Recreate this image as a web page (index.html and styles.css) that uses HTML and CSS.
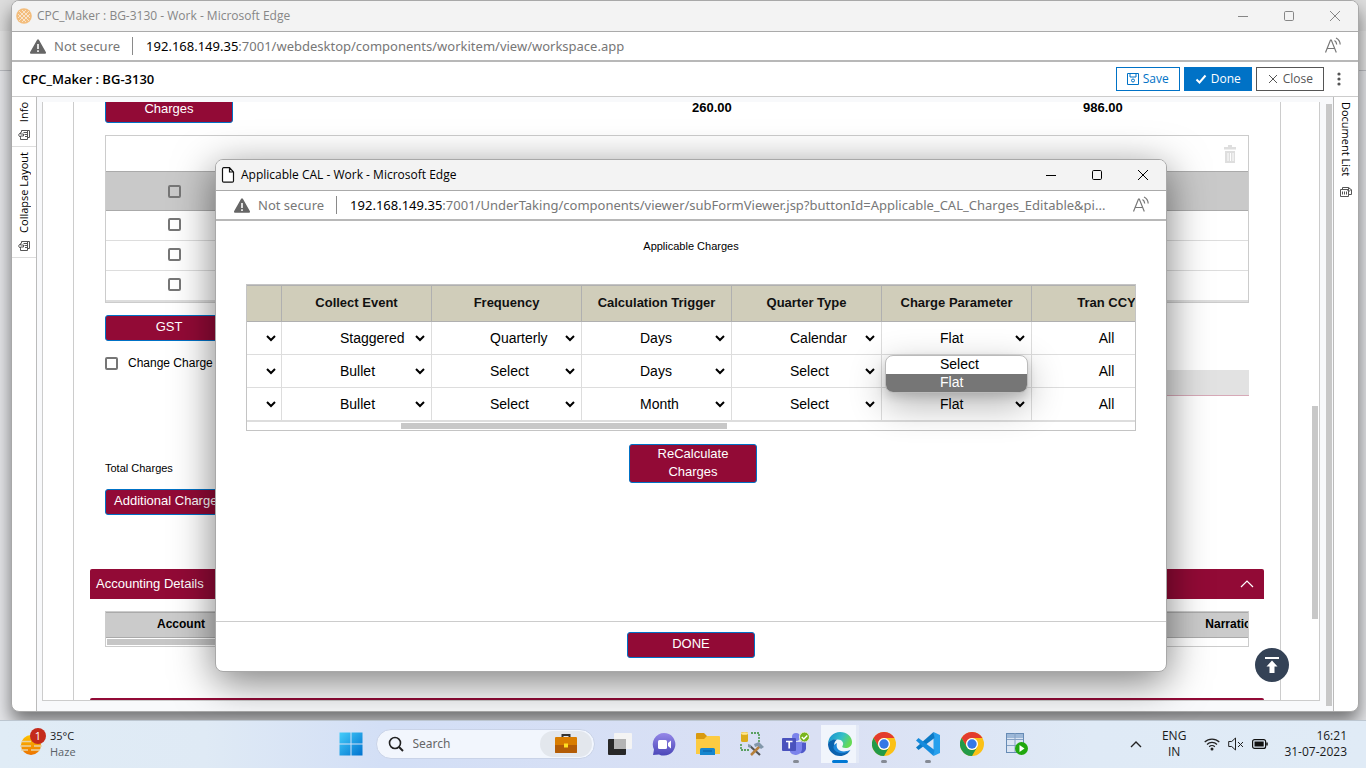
FILE: index.html
```html
<!DOCTYPE html>
<html lang="en">
<head>
<meta charset="utf-8">
<title>CPC_Maker : BG-3130 - Work</title>
<link rel="stylesheet" href="styles.css">
</head>
<body>
<svg class="defs" aria-hidden="true">
  <symbol id="i-warn" viewBox="0 0 16 15"><path d="M7 .9a1.2 1.2 0 0 1 2 0l6.8 12.2a1.1 1.1 0 0 1-1 1.7H1.200a1.100 1.100 0 0 1-1-1.700z" fill="#666"/><path d="M8 5v5M8 11.300v1.600" stroke="#fff" stroke-width="1.600"/></symbol>
  <symbol id="i-aloud" viewBox="0 0 18 18"><path d="M1.500 15.500 6.500 3h.8l5 12.500M3.300 11.500h7.400M10.500 3.500q2 1.200 2.200 4M12 1q4 2 4.200 6.500" fill="none" stroke="#777" stroke-width="1.200"/></symbol>
  <symbol id="i-min" viewBox="0 0 12 12"><path d="M1 6.500h10" stroke="currentColor"/></symbol>
  <symbol id="i-max" viewBox="0 0 12 12"><rect x="1.500" y="1.500" width="9" height="9" rx="1.200" fill="none" stroke="currentColor"/></symbol>
  <symbol id="i-x" viewBox="0 0 12 12"><path d="M1 1l10 10M11 1 1 11" stroke="currentColor" fill="none"/></symbol>
  <symbol id="i-restore" viewBox="0 0 12 12"><path d="M3.500 3.500v-2h8v7H9.500M5.500 3.500h4M6.500 5.500h3M7 7.500h2.500M2.500 3.500.5 6l2 2.500V7h3V5h-3zM2.500 8.500v2h7V2" fill="none" stroke="#555"/></symbol>
  <symbol id="i-list" viewBox="0 0 12 12"><path d="M.5 3.500h8v7h-8zM2.500 3V1.500h6M8.500 8.500h3v-5M2.500 5.500v3M4.500 5.500v3M6.500 5.500v3M7 4.500l2.500-2M8.500 1.500 11 3.500 8.500 6z" fill="none" stroke="#555"/></symbol>
  <symbol id="i-chrome" viewBox="0 0 24 24"><circle cx="12" cy="12" r="12" fill="#fbc116"/><path d="M1.600 6A12 12 0 0 1 22.400 6H12a6 6 0 0 0-5.200 9z" fill="#e33b2e"/><path d="M1.600 6A12 12 0 0 0 12 24l5.200-9a6 6 0 0 1-10.400 0z" fill="#229a48"/><circle cx="12" cy="12" r="6" fill="#fff"/><circle cx="12" cy="12" r="4.700" fill="#3478e6"/></symbol>
</svg>

<main class="desktop">
  <section class="window main-window" aria-label="Work item window">
    <div class="titlebar">
      <svg class="app-icon" viewBox="0 0 16 16"><circle cx="8" cy="8" r="7.800" fill="#f3bd7c"/><path d="M3 3l10 10M13 3 3 13M6 2l8 8M2 6l8 8M10 2 2 10M14 6l-8 8" stroke="#fae3c8"/></svg>
      <span class="window-title">CPC_Maker : BG-3130 - Work - Microsoft Edge</span>
      <span class="window-buttons">
        <button aria-label="Minimize"><svg><use href="#i-min"/></svg></button>
        <button aria-label="Maximize"><svg><use href="#i-max"/></svg></button>
        <button aria-label="Close window"><svg><use href="#i-x"/></svg></button>
      </span>
    </div>
    <div class="addressbar">
      <svg class="warn"><use href="#i-warn"/></svg>
      <span class="not-secure">Not secure</span>
      <span class="url"><b>192.168.149.35</b>:7001/webdesktop/components/workitem/view/workspace.app</span>
      <button class="aloud" aria-label="Read aloud"><svg><use href="#i-aloud"/></svg></button>
    </div>
    <header class="work-header">
      <h1>CPC_Maker : BG-3130</h1>
      <div class="work-actions">
        <button class="act save"><svg viewBox="0 0 12 12"><path d="M.5.5h11v11H.500zM3 .5v3.500h6V.500" fill="none" stroke="currentColor"/><circle cx="6" cy="7.500" r="1.500" fill="none" stroke="currentColor"/></svg>Save</button>
        <button class="act done"><svg viewBox="0 0 12 12"><path d="M1.500 6.500 4.500 9.500 10.500 2.500" fill="none" stroke="currentColor" stroke-width="2"/></svg>Done</button>
        <button class="act close"><svg viewBox="0 0 12 12"><path d="M2 2l8 8M10 2l-8 8" fill="none" stroke="currentColor"/></svg>Close</button>
        <button class="more" aria-label="More"><svg viewBox="0 0 4 14"><circle cx="2" cy="2" r="1.600"/><circle cx="2" cy="7" r="1.600"/><circle cx="2" cy="12" r="1.600"/></svg></button>
      </div>
    </header>
    <div class="work-body">
      <nav class="rail rail-left">
        <button class="rail-tab"><span>Info</span><svg><use href="#i-restore"/></svg></button>
        <button class="rail-tab"><span>Collapse Layout</span><svg><use href="#i-restore"/></svg></button>
      </nav>
      <div class="work-area">
        <div class="frame">
          <div class="form">
            <div class="inset">
              <div class="amounts"><button class="btn">Charges</button><b>260.00</b><b>986.00</b></div>
              <div class="grid-box">
                <div class="grid-tools"><button aria-label="Delete"><svg viewBox="0 0 12 18"><path d="M0 2h4V0h4v2h4v2.500H0zM1 6h10v12H1z" fill="#dedede"/><path d="M4 8v8M6.500 8v8M9 8v8" stroke="#fff"/></svg></button></div>
                <table class="charge-table">
                  <thead><tr><th><input type="checkbox" aria-label="Select all"></th><th></th></tr></thead>
                  <tbody>
                    <tr><td><input type="checkbox" aria-label="Select row 1"></td><td></td></tr>
                    <tr><td><input type="checkbox" aria-label="Select row 2"></td><td></td></tr>
                    <tr><td><input type="checkbox" aria-label="Select row 3"></td><td></td></tr>
                  </tbody>
                </table>
              </div>
              <button class="btn gst">GST</button>
              <div class="change-row">
                <label><input type="checkbox">Change Charge</label>
                <input class="readonly" type="text" disabled aria-label="Amount">
              </div>
              <p class="total">Total Charges</p>
              <button class="btn">Additional Charges</button>
            </div>
            <button class="section-head accounting">Accounting Details<svg viewBox="0 0 14 8"><path d="M1 7l6-6 6 6" fill="none" stroke="currentColor" stroke-width="1.200"/></svg></button>
            <div class="inset">
              <div class="account-box">
                <table class="account-table"><thead><tr><th>Account</th><th></th><th>Narration</th></tr></thead></table>
                <div class="account-scroll"></div>
              </div>
            </div>
            <div class="section-head next-section"></div>
          </div>
          <div class="frame-scroll"></div>
        </div>
        <div class="area-scroll"></div>
      </div>
      <nav class="rail rail-right">
        <button class="rail-tab"><span>Document List</span><svg><use href="#i-list"/></svg></button>
      </nav>
      <button class="to-top" aria-label="Back to top"><svg viewBox="0 0 14 16"><path d="M0 0h14v2H0zM7 3.500l5.500 6H9.500V16h-5V9.500h-3z" fill="#fff"/></svg></button>
    </div>
  </section>

  <section class="window popup" aria-label="Applicable CAL window">
    <div class="titlebar">
      <svg class="app-icon page-icon" viewBox="0 0 14 16"><path d="M1.500 2A1.200 1.200 0 0 1 2.700.7H8.500L12.500 5v9a1.200 1.200 0 0 1-1.200 1.200H2.700A1.200 1.200 0 0 1 1.500 14zM8.500.7V5h4" fill="#fff" stroke="#111" stroke-width="1.200"/></svg>
      <span class="window-title">Applicable CAL - Work - Microsoft Edge</span>
      <span class="window-buttons">
        <button aria-label="Minimize"><svg><use href="#i-min"/></svg></button>
        <button aria-label="Maximize"><svg><use href="#i-max"/></svg></button>
        <button aria-label="Close window"><svg><use href="#i-x"/></svg></button>
      </span>
    </div>
    <div class="addressbar">
      <svg class="warn"><use href="#i-warn"/></svg>
      <span class="not-secure">Not secure</span>
      <span class="url"><b>192.168.149.35</b>:7001/UnderTaking/components/viewer/subFormViewer.jsp?buttonId=Applicable_CAL_Charges_Editable&amp;pi...</span>
      <button class="aloud" aria-label="Read aloud"><svg><use href="#i-aloud"/></svg></button>
    </div>
    <div class="popup-body">
      <h2>Applicable Charges</h2>
      <div class="cal-wrap">
        <div class="cal-box">
          <table class="cal-table">
            <thead><tr><th class="first"></th><th>Collect Event</th><th>Frequency</th><th>Calculation Trigger</th><th>Quarter Type</th><th>Charge Parameter</th><th>Tran CCY</th></tr></thead>
            <tbody>
              <tr>
                <td><select class="narrow" aria-label="Charge type"><option></option></select></td>
                <td><select aria-label="Collect Event"><option>Staggered</option></select></td>
                <td><select aria-label="Frequency"><option>Quarterly</option></select></td>
                <td><select aria-label="Calculation Trigger"><option>Days</option></select></td>
                <td><select aria-label="Quarter Type"><option>Calendar</option></select></td>
                <td><select aria-label="Charge Parameter"><option>Flat</option></select></td>
                <td>All</td>
              </tr>
              <tr>
                <td><select class="narrow" aria-label="Charge type"><option></option></select></td>
                <td><select aria-label="Collect Event"><option>Bullet</option></select></td>
                <td><select aria-label="Frequency"><option>Select</option></select></td>
                <td><select aria-label="Calculation Trigger"><option>Days</option></select></td>
                <td><select aria-label="Quarter Type"><option>Select</option></select></td>
                <td><select aria-label="Charge Parameter"><option></option></select></td>
                <td>All</td>
              </tr>
              <tr>
                <td><select class="narrow" aria-label="Charge type"><option></option></select></td>
                <td><select aria-label="Collect Event"><option>Bullet</option></select></td>
                <td><select aria-label="Frequency"><option>Select</option></select></td>
                <td><select aria-label="Calculation Trigger"><option>Month</option></select></td>
                <td><select aria-label="Quarter Type"><option>Select</option></select></td>
                <td><select aria-label="Charge Parameter"><option>Flat</option></select></td>
                <td>All</td>
              </tr>
            </tbody>
          </table>
          <div class="cal-scroll"><span></span></div>
        </div>
        <ul class="menu" role="listbox" aria-label="Charge Parameter options">
          <li role="option">Select</li>
          <li role="option" aria-selected="true">Flat</li>
        </ul>
      </div>
      <button class="btn recalc">ReCalculate Charges</button>
    </div>
    <footer class="popup-foot"><button class="btn">DONE</button></footer>
  </section>
</main>

<footer class="taskbar">
  <div class="weather">
    <svg viewBox="0 0 28 28"><defs><linearGradient id="sun" x2="0" y2="1"><stop offset="0" stop-color="#ffc400"/><stop offset="1" stop-color="#ec7200"/></linearGradient></defs><circle cx="12" cy="17" r="10" fill="url(#sun)"/><path d="M3 13.500h9M15 13.500h8M1 18h11M15 18h8M2 22h7M12 22h9" stroke="#e9d2a4" stroke-width="1.500"/><circle cx="19" cy="8" r="8" fill="#c42b1c"/><text x="19" y="12" text-anchor="middle" class="badge-text">1</text></svg>
    <div><span class="temp">35°C</span><span class="cond">Haze</span></div>
  </div>
  <div class="apps">
    <button class="app" aria-label="Start"><svg viewBox="0 0 24 24"><defs><linearGradient id="win" x2="1" y2="1"><stop offset="0" stop-color="#45cdfa"/><stop offset="1" stop-color="#0072cf"/></linearGradient></defs><path d="M.5.5h11v11H.500zM12.500.5h11v11h-11zM.5 12.500h11v11H.500zM12.500 12.500h11v11h-11z" fill="url(#win)"/></svg></button>
    <div class="search">
      <svg viewBox="0 0 16 16"><circle cx="7" cy="7" r="5.500" fill="none" stroke="#222" stroke-width="1.600"/><path d="M11 11l4 4" stroke="#222" stroke-width="2"/></svg>
      <input type="text" placeholder="Search" aria-label="Search">
      <span class="search-pic"><svg viewBox="0 0 22 19"><path d="M7.500 4V1h7v3" fill="none" stroke="#333" stroke-width="2"/><rect y="3" width="22" height="16" rx="1" fill="#d97d00"/><path d="M0 11h22v7a1 1 0 0 1-1 1H1a1 1 0 0 1-1-1z" fill="#b35c06"/><rect x="9" y="9.500" width="4" height="4" fill="#ffdf20"/></svg></span>
    </div>
    <button class="app" aria-label="Task view"><svg viewBox="0 0 24 24"><rect x="0" y="7" width="18" height="16" rx="1" fill="#282828"/><rect x="6" y="1" width="18" height="16" rx="1" fill="#f4f4f4"/><path d="M6 7h12v10H6z" fill="#b4b4b4"/></svg></button>
    <button class="app" aria-label="Chat"><svg viewBox="0 0 24 24"><defs><linearGradient id="chat" x2="0" y2="1"><stop offset="0" stop-color="#9588e8"/><stop offset="1" stop-color="#4a46b8"/></linearGradient></defs><path d="M12 1a11.300 11.300 0 1 1-5 21.400L1 23l1-5.500A11.300 11.300 0 0 1 12 1z" fill="url(#chat)"/><rect x="6" y="8" width="9" height="9" rx="1.500" fill="#fff"/><path d="M16 11l3-2.500v8L16 14z" fill="#fff"/></svg></button>
    <button class="app" aria-label="File Explorer"><svg viewBox="0 0 24 24"><path d="M0 2a1 1 0 0 1 1-1h7l3 3h12v8H0z" fill="#d99a10"/><path d="M0 7h8l3-3h12a1 1 0 0 1 1 1v17H0z" fill="#fccb42"/><path d="M4 23v-5.500A1.500 1.500 0 0 1 5.500 16h12a1.500 1.500 0 0 1 1.500 1.500V23z" fill="#1686ce"/><path d="M7 19h9" stroke="#0a5ca0"/></svg></button>
    <button class="app" aria-label="Database tools"><svg viewBox="0 0 24 24"><path d="M11 1h8v9M1 12v6h9" fill="none" stroke="#308a30" stroke-width="1.300" stroke-dasharray="2 1"/><rect x="1" y="0" width="7" height="10" rx="1.500" fill="#dcac1c"/><ellipse cx="4.500" cy="1.500" rx="3.500" ry="1.300" fill="#ffe78d"/><path d="M10 14 20 23" stroke="#555" stroke-width="2.200"/><path d="M20 14 11 23" stroke="#b7813c" stroke-width="2.500"/><path d="M14 12l5-2 5 5-3 2-3-3-3 1zM8 12l3 1v3l-3-1z" fill="#8297aa"/></svg></button>
    <button class="app running" aria-label="Teams"><svg class="teams" viewBox="0 0 28 24"><circle cx="14" cy="5" r="4" fill="#7b83eb"/><circle cx="22" cy="8" r="3" fill="#5059c9"/><path d="M18 11h6v6a5 5 0 0 1-6 4z" fill="#5059c9"/><path d="M8 10h12v7a6.500 6.500 0 0 1-12 3z" fill="#7b83eb"/><rect x="0" y="6" width="14" height="13" rx="1" fill="#4a52bd"/><path d="M4 9.500h6.500M7.200 9.500v7" stroke="#fff" stroke-width="1.700"/><circle cx="22.500" cy="5" r="5" fill="#79b51c" stroke="#eef3e0"/><path d="M19.800 5l2 2 3.500-3.500" fill="none" stroke="#fff" stroke-width="1.400"/></svg></button>
    <button class="app active" aria-label="Edge"><svg viewBox="0 0 24 24"><defs><linearGradient id="e1" x2="1" y2=".4"><stop offset="0" stop-color="#168ad1"/><stop offset=".6" stop-color="#35bfc8"/><stop offset="1" stop-color="#65da55"/></linearGradient></defs><path d="M0 12A12 12 0 0 1 12 0c7 0 12 4.600 12 10 0 4-3 6-6.500 6-2.500 0-4-.8-3-2 2-3-.5-6.500-4.500-6.500C5 7.500 1 9 0 12z" fill="url(#e1)"/><path d="M0 12C1 8.500 5 7 9 7.500c-4 3-3.500 8 0 11 3.500 2.800 9 2.500 13.500-.8C20.500 21.500 16.500 24 12 24A12 12 0 0 1 0 12z" fill="#0b61ae"/><path d="M9 11c-2 6 4 11 13 7-4 4-11 4.500-15 .5-2.500-2.500-2-6 2-7.500z" fill="#1d87db"/></svg></button>
    <button class="app running" aria-label="Chrome"><svg><use href="#i-chrome"/></svg></button>
    <button class="app running" aria-label="Visual Studio Code"><svg viewBox="0 0 24 24"><path d="M17.500 0 24 3v18l-6.500 3z" fill="#27a0ed"/><path d="M17.500 0 0 15.500 2.500 18 18.500 6z" fill="#0b79c5"/><path d="M17.500 24 0 8.500 2.500 6 18.500 18z" fill="#168bdd"/></svg></button>
    <button class="app" aria-label="Chrome profile"><svg><use href="#i-chrome"/></svg></button>
    <button class="app" aria-label="Database server"><svg viewBox="0 0 24 24"><rect x="2.500" y="1.500" width="17" height="19" fill="#dbe5f3" stroke="#668bb5"/><path d="M3 2h16v4H3z" fill="#9db8d8"/><path d="M3 7.500h16M3 13.500h16M11 1v19" stroke="#85a1c4"/><circle cx="17.500" cy="16.500" r="6.500" fill="#20a80e"/><path d="M15.500 13l5 3.500-5 3.500z" fill="#fff"/></svg></button>
  </div>
  <div class="tray">
    <button aria-label="Show hidden icons"><svg class="up" viewBox="0 0 12 8"><path d="M1 7l5-5 5 5" fill="none" stroke="#222" stroke-width="1.400"/></svg></button>
    <div class="lang"><span>ENG</span><span>IN</span></div>
    <div class="status">
      <svg viewBox="0 0 16 14"><path d="M.7 5a10.500 10.500 0 0 1 14.600 0M3 7.500a7 7 0 0 1 10 0M5.200 9.800a4 4 0 0 1 5.600 0" fill="none" stroke="#222" stroke-width="1.200"/><circle cx="8" cy="12" r="1.500" fill="#222"/></svg>
      <svg viewBox="0 0 16 14"><path d="M.7 4.500h3L7.500 1v12L3.700 9.500h-3zM10 5l5 5M15 5l-5 5" fill="none" stroke="#222"/></svg>
      <svg viewBox="0 0 16 14"><rect x=".6" y="2.600" width="13" height="8.800" rx="2" fill="none" stroke="#111" stroke-width="1.200"/><rect x="2.500" y="4.500" width="9.200" height="5" fill="#111"/><path d="M15 5.500v3" stroke="#111" stroke-width="1.500"/></svg>
    </div>
    <div class="clock"><span>16:21</span><span>31-07-2023</span></div>
  </div>
</footer>
</body>
</html>
```

FILE: styles.css
```css
* { box-sizing: border-box; }
body {
  margin: 0;
  height: 100vh;
  display: flex;
  flex-direction: column;
  overflow: hidden;
  font: 13px/16px "Liberation Sans", Arial, sans-serif;
  color: #000;
}
button { font: inherit; color: inherit; background: none; border: 0; padding: 0; }
svg { display: block; flex: none; }
table { border-collapse: separate; border-spacing: 0; table-layout: fixed; }
th, td { padding: 0; text-align: center; }
.defs { position: absolute; width: 0; height: 0; }

/* Desktop and windows */
.desktop {
  position: relative;
  flex: 1;
  min-height: 0;
  display: flex;
  padding: 0 7px 8px 11px;
  background: linear-gradient(#dedede 0 31px, #e6e6e6 31px 70px, #bdbfc4 70px 71px, #e7e8eb 71px);
}
.window {
  display: flex;
  flex-direction: column;
  background: #fff;
  border: 1px solid #a8a8a8;
  border-radius: 8px;
  overflow: hidden;
}
.main-window { flex: 1; min-width: 0; box-shadow: 0 10px 18px rgba(0, 0, 0, .5); position: relative; }
.popup {
  position: absolute;
  left: 215px;
  right: 199px;
  top: 159px;
  bottom: 48px;
  box-shadow: 0 10px 42px rgba(0, 0, 0, .52);
}
.titlebar {
  height: 31px;
  flex: none;
  display: flex;
  align-items: center;
  padding-left: 4px;
  background: #f3f3f3;
  border-bottom: 1px solid #aaa;
  font: 12px/16px "Open Sans", "Noto Sans", sans-serif;
}
.main-window > .titlebar { color: #868686; }
.app-icon { width: 16px; height: 16px; margin-right: 5px; }
.window-title { flex: 1; }
.window-buttons { display: flex; }
.window-buttons button { width: 46px; height: 30px; display: grid; place-items: center; }
.window-buttons svg { width: 12px; height: 12px; }
.popup .titlebar, .popup .titlebar button { color: #000; }
.addressbar {
  height: 30px;
  flex: none;
  display: flex;
  align-items: center;
  padding: 0 16px 0 18px;
  border-bottom: 2px solid #b8b8b8;
  font: 13px/18px "Noto Sans", "Open Sans", sans-serif;
  color: #777;
}
.warn { width: 16px; height: 15px; margin-right: 8px; }
.not-secure { padding-right: 12px; margin-right: 13px; border-right: 1px solid #8a8a8a; white-space: nowrap; }
.url { flex: 1; min-width: 0; white-space: nowrap; }
.url b { font-weight: 400; color: #000; }
.aloud svg { width: 18px; height: 18px; }

/* Work item header */
.work-header {
  height: 35px;
  flex: none;
  display: flex;
  align-items: center;
  justify-content: space-between;
  padding: 0 13px 0 10px;
  border-bottom: 1px solid #ccc;
  font-family: "Open Sans", "Noto Sans", sans-serif;
}
.work-header h1 { margin: 0; font-size: 13px; font-weight: 600; }
.work-actions { display: flex; align-items: center; gap: 4px; font-size: 12px; }
.act { height: 24px; display: flex; align-items: center; gap: 4px; padding: 0 10px; border: 1px solid; }
.act svg { width: 12px; height: 12px; }
.save { color: #0072c6; }
.done { color: #fff; background: #0072c6; border-color: #0072c6; }
.close { color: #555; }
.more { width: 12px; margin-left: 5px; display: grid; place-items: center; }
.more svg { width: 4px; height: 14px; fill: #555; }

.work-body { flex: 1; min-height: 0; display: flex; position: relative; }
.rail { flex: none; width: 25px; font: 11px/14px "Open Sans", "Noto Sans", sans-serif; }
.rail-left { border-right: 1px solid #bbb; }
.rail-right { border-left: 1px solid #bbb; }
.rail-tab { width: 100%; display: flex; flex-direction: column; align-items: center; gap: 7px; padding: 5px 0; }
.rail-left .rail-tab { border-bottom: 1px solid #ddd; }
.rail-tab span { writing-mode: vertical-rl; line-height: 16px; }
.rail-left span { transform: rotate(180deg); }
.rail-right .rail-tab { gap: 10px; }
.rail-tab svg { width: 12px; height: 12px; }

.work-area { flex: 1; min-width: 0; display: flex; gap: 6px; padding: 5px 1px 0 5px; background: #f8f9fb; }
.area-scroll { width: 6px; margin: 2px 0 5px; background: #c8c8c8; }
.frame {
  flex: 1;
  min-width: 0;
  display: flex;
  margin-bottom: 10px;
  padding-left: 30px;
  background: #fff;
  border: 1px solid #ccc;
  border-top: 0;
  overflow: hidden;
}
.frame-scroll { width: 6px; height: 213px; margin: 304px 1px 0 31px; background: #c8c8c8; }
.form { flex: 1; min-width: 0; padding: 0 16px; border: solid #ccc; border-width: 0 1px; }
.inset { padding: 0 15px; }

.btn {
  display: block;
  width: 128px;
  height: 26px;
  padding-bottom: 3px;
  line-height: 18px;
  color: #fff;
  background: #920a36;
  border: 1px solid #0072c6;
  border-radius: 3px;
  white-space: nowrap;
}
.amounts { display: grid; grid-template-columns: 587fr 391fr 166fr; margin-top: -5px; }
.amounts b { margin-top: 3px; }

input[type=checkbox] {
  appearance: none;
  width: 13px;
  height: 13px;
  margin: 0;
  border: 2px solid #767676;
  border-radius: 2px;
  background: #fff;
  vertical-align: middle;
}
.grid-box { margin-top: 12px; border: 1px solid #ccc; }
.grid-tools { height: 35px; display: flex; align-items: center; justify-content: flex-end; padding-right: 12px; }
.grid-tools svg { width: 12px; height: 18px; }
.charge-table { width: 100%; }
.charge-table th { height: 40px; background: #c9c9c9; border: solid #aaa; border-width: 1px 0; }
.charge-table th input { background: transparent; }
.charge-table th:first-child { width: 137px; }
.charge-table td { height: 30px; padding-bottom: 3px; border-bottom: 1px solid #ddd; }
.charge-table tr:last-child td { height: 31px; border-bottom-width: 2px; }
.gst { margin-top: 12px; }
.change-row { display: flex; justify-content: space-between; margin-top: 12px; height: 43px; }
.change-row label { display: flex; align-items: center; gap: 10px; height: 20px; font-size: 12px; }
.readonly { width: 33%; height: 26px; align-self: flex-end; border: 0; border-bottom: 1px solid #d7a9b7; background: #e2e2e2; }
.total { margin: 64px 0 13px; font-size: 11px; }

.section-head {
  display: flex;
  align-items: center;
  justify-content: space-between;
  width: 100%;
  height: 30px;
  padding: 0 10px 0 6px;
  color: #fff;
  background: #920a36;
  border-radius: 2px 2px 0 0;
}
.section-head svg { width: 14px; height: 8px; }
.accounting { margin-top: 54px; }
.next-section { margin-top: 51px; }
.account-box { margin-top: 12px; height: 36px; border: 1px solid #ccc; overflow: hidden; }
.account-table { width: calc(100% + 59px); font-size: 12px; }
.account-table th { height: 26px; padding-bottom: 2px; background: #cbcbcb; border: solid #aaa; border-width: 1px 0; }
.account-table th:first-child, .account-table th:last-child { width: 150px; }
.account-scroll { width: 40%; height: 6px; margin: 1px; background: #c6c6c6; }
.to-top {
  position: absolute;
  right: 69px;
  bottom: 29px;
  width: 34px;
  height: 34px;
  display: grid;
  place-items: center;
  border-radius: 50%;
  background: #344256;
}
.to-top svg { width: 14px; height: 16px; }

/* Applicable charges window */
.popup-body { flex: 1; padding: 0 30px; background: #fff; }
.popup h2 { margin: 17px 0 30px; font-size: 11px; font-weight: 400; text-align: center; }
.cal-wrap { position: relative; }
.cal-box { border: 1px solid #c4c4c4; overflow: hidden; }
.cal-table { width: 935px; font-size: 14px; }
.cal-table th { width: 150px; height: 37px; padding-bottom: 2px; background: #d0cdba; border: solid #b0b0b0; border-width: 1px 1px 1px 0; font-size: 13px; color: #111; }
.cal-table .first { width: 35px; }
.cal-table td { height: 33px; border: solid #ddd; border-width: 0 1px 1px 0; }
.cal-table tr:last-child td { height: 34px; border-bottom-width: 2px; }
.cal-table select {
  display: block;
  width: 142px;
  height: 30px;
  margin: 0 3px 0 4px;
  padding: 0 0 0 50px;
  border: 0;
  background: transparent;
  color: #000;
  font: inherit;
}
.cal-table .narrow { width: 30px; padding: 0; margin: 0 2px; }
.cal-scroll { height: 8px; padding-top: 1px; }
.cal-scroll span { display: block; width: 326px; height: 6px; margin-left: 154px; background: #c8c8c8; }
.menu {
  position: absolute;
  left: 639px;
  top: 71px;
  width: 143px;
  margin: 0;
  padding: 0;
  list-style: none;
  font-size: 14px;
  line-height: 16px;
  background: #fff;
  border: 1px solid #bbb;
  border-radius: 8px;
  overflow: hidden;
  box-shadow: 0 12px 36px rgba(0, 0, 0, .3), 0 4px 10px rgba(0, 0, 0, .15);
}
.menu li { padding: 0 0 2px 54px; }
.menu [aria-selected] { color: #fff; background: #767676; }
.recalc { height: 39px; margin: 13px 0 0 calc(50% - 62px); padding: 0 20px 3px; white-space: normal; }
.popup-foot { display: flex; justify-content: center; height: 50px; padding-top: 10px; border-top: 1px solid #ccc; }

/* Taskbar */
.taskbar {
  position: relative;
  height: 48px;
  flex: none;
  display: grid;
  grid-template-columns: 1fr auto 1fr;
  align-items: center;
  padding-bottom: 2px;
  background: linear-gradient(90deg, #e0ecf6, #dfeaf5 15%, #d3dff6 28%, #dae0f4 60%, #dfeaf6 80%, #e0ebf6);
  border-top: 1px solid #bcc6d0;
  font: 11px/16px "Open Sans", "Noto Sans", sans-serif;
  color: #1a1a1a;
}
.taskbar span { display: block; }
.weather { display: flex; gap: 3px; padding-left: 19px; }
.weather svg { width: 28px; height: 28px; }
.badge-text { font: 11px "Open Sans", sans-serif; fill: #fff; }
.cond { color: #5b6268; }
.apps { display: flex; align-items: center; }
.app { position: relative; width: 44px; height: 38px; display: grid; place-items: center; }
.app svg { width: 24px; height: 24px; }
.app .teams { width: 28px; }
.active { background: linear-gradient(90deg, #f1f5fc 0 35px, #e3e9f6 35px) center / 38px 100% no-repeat; }
.running::after, .active::after { content: ""; position: absolute; bottom: 0; width: 6px; height: 3px; border-radius: 2px; background: #858a94; }
.active::after { width: 16px; background: #0078d4; }
.search { display: flex; align-items: center; width: 219px; height: 30px; margin: 0 3px; padding: 2px 2px 2px 11px; border-radius: 15px; background: #f2f6fd; border: 1px solid #c9d3e8; }
.search > svg { width: 16px; height: 16px; }
.search input { flex: 1; min-width: 0; margin-left: 9px; padding: 0; border: 0; background: none; font: 12px/16px "Noto Sans", "Open Sans", sans-serif; }
.search input::placeholder { color: #666; }
.search-pic { height: 26px; width: 52px; border-radius: 13px; background: #e3e7ed; }
.taskbar .search-pic { display: grid; place-items: center; }
.search-pic svg { width: 22px; height: 19px; }
.tray { display: flex; align-items: center; justify-content: flex-end; padding-right: 19px; font-size: 12px; }
.up { width: 12px; height: 8px; }
.lang { margin: 0 18px 0 20px; text-align: center; }
.status { display: flex; gap: 8px; margin-right: 16px; }
.status svg { width: 16px; height: 14px; }
.clock { text-align: right; }
```
